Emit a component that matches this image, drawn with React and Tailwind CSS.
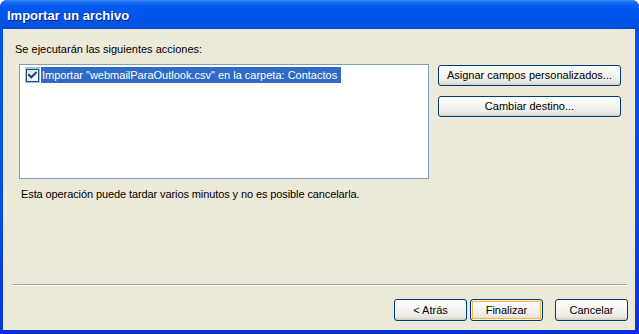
import React from "react";

function XPButton({ children, className = "", isDefault = false }) {
  return (
    <div
      className={
        "flex items-center justify-center rounded-[3px] border border-[#003C74] bg-[linear-gradient(to_bottom,#FFFFFF_0%,#F7F6F2_40%,#ECEBE6_80%,#D6D0C5_100%)] text-black " +
        (isDefault
          ? "shadow-[inset_0_0_0_1px_#FFF0CF,inset_0_0_0_2px_#F9B64A] "
          : "shadow-[inset_0_-1px_0_0_#D8D2C6] ") +
        className
      }
    >
      {children}
    </div>
  );
}

export default function App() {
  return (
    <div
      className="w-[639px] h-[334px] flex flex-col bg-[#0A4FDD] rounded-t-[7px] overflow-hidden text-[11px] leading-[13px] text-black"
      style={{ fontFamily: '"Liberation Sans", Arial, sans-serif' }}
    >
      {/* Title bar */}
      <div className="h-[29px] shrink-0 flex items-center pl-[7px] pt-[1px] bg-[linear-gradient(to_bottom,#3D8FF8_0%,#1A6CF5_8%,#0058EE_22%,#0055E8_60%,#0052E2_85%,#0048D8_100%)]">
        <span className="text-white font-bold text-[13px] leading-[15px] [text-shadow:1px_1px_0_#0A1E8C]">
          Importar un archivo
        </span>
      </div>

      {/* Body with frame */}
      <div className="flex-1 flex pl-[3px] pr-[4px] pb-[4px] bg-[linear-gradient(to_bottom,#0055E5_0%,#0050E0_60%,#0831D9_100%)]">
        <div className="flex-1 flex flex-col bg-[#ECE9D8]">
          <div className="pl-[12px] pt-[14px]">Se ejecutarán las siguientes acciones:</div>

          <div className="flex mt-[8px]">
            <div className="ml-[16px] w-[410px] h-[115px] border border-[#7F9DB9] bg-white pt-[2px] pl-[5px]">
              <div className="flex items-center h-[16px]">
                <div className="w-[15px] h-[16px] bg-[#A9BDE6] flex items-center justify-center">
                  <div className="w-[13px] h-[13px] border border-[#1C5180] bg-[linear-gradient(135deg,#DCDCD7_0%,#F4F4F1_60%,#FFFFFF_100%)] flex items-center justify-center">
                    <svg width="9" height="9" viewBox="0 0 9 9">
                      <path d="M1 4 L3.3 6.3 L8 1.6" stroke="#21398A" strokeWidth="2" fill="none" strokeLinecap="square" />
                    </svg>
                  </div>
                </div>
                <div className="ml-[1px] h-[16px] bg-[#316AC5] text-white pl-[1px] pr-[4px] flex items-center">
                  Importar "webmailParaOutlook.csv" en la carpeta: Contactos
                </div>
              </div>
            </div>

            <div className="ml-[9px] mt-[1px] flex flex-col gap-[10px]">
              <XPButton className="w-[183px] h-[21px]">Asignar campos personalizados...</XPButton>
              <XPButton className="w-[183px] h-[21px]">Cambiar destino...</XPButton>
            </div>
          </div>

          <div className="ml-[18px] mt-[9px] tracking-[-0.1px]">
            Esta operación puede tardar varios minutos y no es posible cancelarla.
          </div>

          <div className="flex-1" />

          <div className="ml-[9px] mr-[8px] h-[2px] border-t border-[#ACA899] border-b border-b-white" />

          <div className="flex justify-end mt-[13px] mb-[9px] mr-[7px]">
            <XPButton className="w-[73px] h-[22px]">&lt; Atrás</XPButton>
            <XPButton isDefault className="w-[73px] h-[22px] ml-[3px]">Finalizar</XPButton>
            <XPButton className="w-[73px] h-[22px] ml-[12px]">Cancelar</XPButton>
          </div>
        </div>
      </div>
    </div>
  );
}
